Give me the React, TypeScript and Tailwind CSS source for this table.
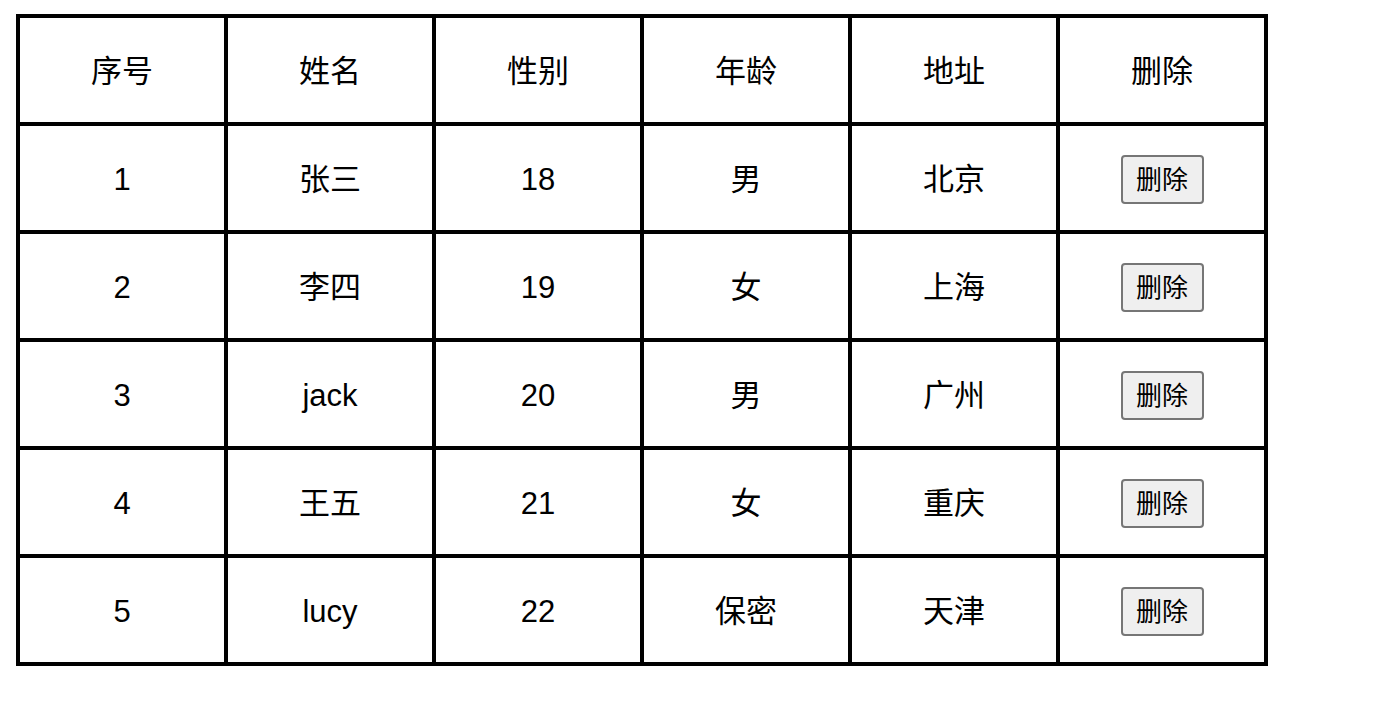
import React from 'react';

const rows = [
  { id: 1, name: '张三', sex: '18', age: '男', addr: '北京' },
  { id: 2, name: '李四', sex: '19', age: '女', addr: '上海' },
  { id: 3, name: 'jack', sex: '20', age: '男', addr: '广州' },
  { id: 4, name: '王五', sex: '21', age: '女', addr: '重庆' },
  { id: 5, name: 'lucy', sex: '22', age: '保密', addr: '天津' },
];

const headers = ['序号', '姓名', '性别', '年龄', '地址', '删除'];

const cell = 'border-[4px] border-black h-[108px] w-[208px] p-0 pt-[3px] text-center align-middle';

export default function App() {
  return (
    <div
      className="min-h-[710px] bg-white pl-[16px] pt-[14px] text-black"
      style={{ fontFamily: '"Liberation Sans", "Noto Sans CJK SC", sans-serif' }}
    >
      <table className="table-fixed border-collapse text-[31px] leading-none">
        <thead>
          <tr>
            {headers.map((h) => (
              <th key={h} className={cell + ' font-normal'}>
                {h}
              </th>
            ))}
          </tr>
        </thead>
        <tbody>
          {rows.map((r) => (
            <tr key={r.id}>
              <td className={cell}>{r.id}</td>
              <td className={cell}>{r.name}</td>
              <td className={cell}>{r.sex}</td>
              <td className={cell}>{r.age}</td>
              <td className={cell}>{r.addr}</td>
              <td className={cell}>
                <button className="h-[49px] w-[83px] rounded-[4px] border-2 border-[#767676] bg-[#efefef] text-[26px] leading-none">
                  删除
                </button>
              </td>
            </tr>
          ))}
        </tbody>
      </table>
    </div>
  );
}
